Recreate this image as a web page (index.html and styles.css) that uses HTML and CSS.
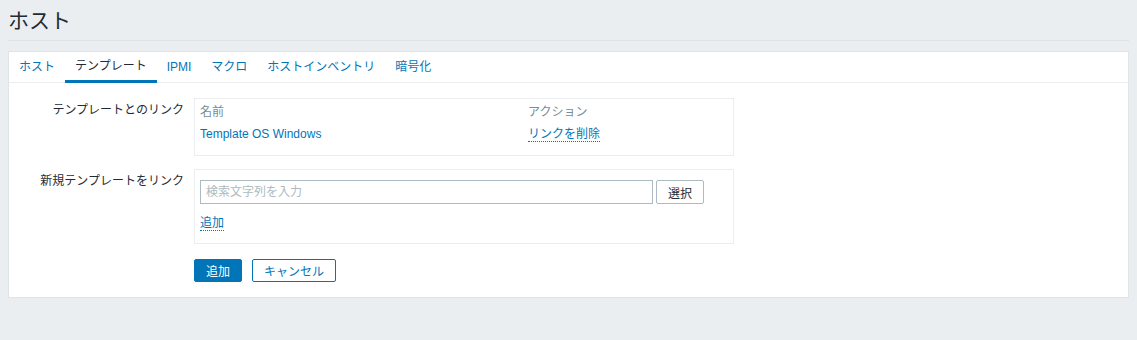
FILE: index.html
```html
<!DOCTYPE html>
<html lang="ja">
<head>
    <meta charset="UTF-8">
    <title>ホスト</title>
    <link rel="stylesheet" href="styles.css">
</head>
<body>
<div class="page">
    <!-- Заголовок -->
    <header class="page-header">
        <h1>ホスト</h1>
    </header>

    <div class="panel">
        <!-- Вкладки -->
        <ul class="tabs">
            <li><a href="#">ホスト</a></li>
            <li class="active"><a href="#">テンプレート</a></li>
            <li><a href="#">IPMI</a></li>
            <li><a href="#">マクロ</a></li>
            <li><a href="#">ホストインベントリ</a></li>
            <li><a href="#">暗号化</a></li>
        </ul>

        <!-- Форма -->
        <form class="form">
            <div class="form-row">
                <label class="form-label">テンプレートとのリンク</label>
                <div class="form-field">
                    <div class="box linked">
                        <div class="linked-head">名前</div>
                        <div class="linked-head">アクション</div>
                        <div><a href="#" class="link">Template OS Windows</a></div>
                        <div><a href="#" class="link dotted">リンクを削除</a></div>
                    </div>
                </div>
            </div>

            <div class="form-row">
                <label class="form-label">新規テンプレートをリンク</label>
                <div class="form-field">
                    <div class="box new-link">
                        <div class="search">
                            <input type="text" class="search-input" placeholder="検索文字列を入力">
                            <button type="button" class="btn-grey">選択</button>
                        </div>
                        <a href="#" class="link dotted">追加</a>
                    </div>
                </div>
            </div>

            <div class="form-buttons">
                <button type="button" class="btn-main">追加</button>
                <button type="button" class="btn-alt">キャンセル</button>
            </div>
        </form>
    </div>
</div>
</body>
</html>
```

FILE: styles.css
```css
* {
    margin: 0;
    padding: 0;
    box-sizing: border-box;
}
body {
    font-family: 'Liberation Sans', Arial, 'Noto Sans CJK JP', sans-serif;
    font-size: 12px;
    background-color: #ebeef0;
    color: #1f2c33;
}
.page {
    padding: 0 8px;
}

/* Заголовок */
.page-header {
    height: 41px;
    border-bottom: 1px solid #dde2e5;
    margin-bottom: 10px;
}
.page-header h1 {
    font-size: 21px;
    font-weight: normal;
    line-height: 40px;
    padding-top: 1px;
}

/* Панель */
.panel {
    background-color: #fff;
    border: 1px solid #dfe4e7;
}

/* Вкладки */
.tabs {
    list-style: none;
    display: flex;
    border-bottom: 1px solid #ebeef0;
    height: 31px;
}
.tabs li {
    height: 31px;
    margin-bottom: -1px;
}
.tabs a {
    display: block;
    padding: 0 10px;
    line-height: 30px;
    color: #0275b8;
    text-decoration: none;
}
.tabs li.active a {
    color: #1f2c33;
    border-bottom: 3px solid #0275b8;
    line-height: 28px;
    height: 31px;
}

/* Форма */
.form {
    padding: 15px 0 15px;
}
.form-row {
    display: flex;
    margin-bottom: 13px;
}
.form-row + .form-row {
    margin-bottom: 15px;
}
.form-label {
    width: 185px;
    flex-shrink: 0;
    padding: 5px 10px 0 0;
    text-align: right;
    line-height: 14px;
}
.box {
    width: 540px;
    border: 1px solid #ebeef0;
}
.linked {
    display: grid;
    grid-template-columns: 328px 1fr;
    row-gap: 8px;
    padding: 6px 5px 13px;
    line-height: 14px;
}
.linked-head {
    color: #768d99;
}
.link {
    color: #0275b8;
    text-decoration: none;
}
.link.dotted {
    display: inline-block;
    line-height: 14px;
    border-bottom: 1px dotted #0275b8;
}
.new-link {
    padding: 10px 5px 12px;
}
.search {
    display: flex;
    gap: 3px;
    margin-bottom: 12px;
}
.search-input {
    width: 453px;
    height: 24px;
    border: 1px solid #acbbc2;
    padding: 0 5px;
    font-family: inherit;
    font-size: 12px;
    color: #1f2c33;
}
.search-input::placeholder {
    color: #acbbc2;
}
.btn-grey {
    width: 48px;
    height: 24px;
    background-color: #fff;
    border: 1px solid #acbbc2;
    border-radius: 2px;
    font-family: inherit;
    font-size: 12px;
    color: #1f2c33;
}

/* Кнопки */
.form-buttons {
    display: flex;
    gap: 10px;
    margin-left: 185px;
}
.btn-main,
.btn-alt {
    height: 23px;
    border-radius: 2px;
    font-family: inherit;
    font-size: 12px;
    padding: 0 10px;
}
.btn-main {
    width: 48px;
    background-color: #0275b8;
    border: 1px solid #0275b8;
    color: #fff;
}
.btn-alt {
    width: 84px;
    background-color: #fff;
    border: 1px solid #0275b8;
    color: #0275b8;
}
```
